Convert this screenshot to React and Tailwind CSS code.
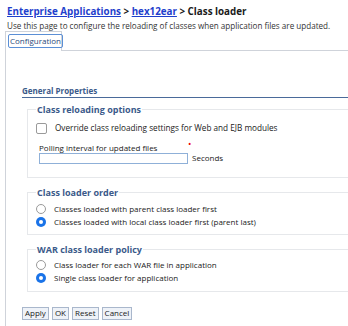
export default function App() {
  return (
    <div className="w-[348px] h-[326px] bg-white overflow-hidden font-['Open_Sans',sans-serif] text-[8px] text-[#1a1a1a] leading-none">
      <div className="pl-[7px] pt-[7px]">
        <div className="font-bold text-[9.8px]">
          <a className="text-[#1f3fcc] underline">Enterprise Applications</a>
          <span> &gt; </span>
          <a className="text-[#1f3fcc] underline">hex12ear</a>
          <span> &gt; Class loader</span>
        </div>
        <p className="mt-[5px] text-[8.1px] text-[#333]">Use this page to configure the reloading of classes when application files are updated.</p>
      </div>

      <div className="mt-[1px] ml-[5px] flex items-end">
        <div className="h-[20px] w-[57px] border border-b-0 border-[#cfd3da] bg-white flex items-center px-[2px]">
          <span className="border border-[#5b8fd6] rounded-[2px] px-[1px] py-[2px] text-[#2b4a7a]">Configuration</span>
        </div>
        <div className="flex-1 border-b border-[#cfd3da]" />
      </div>

      <div className="ml-[5px] border-l border-[#cfd3da] pl-[16px] pt-[36px] pb-[10px]">
        <div className="font-bold text-[#3b5a8a] border-b border-[#4a6a9a] pb-[2px]">General Properties</div>

        <div className="ml-[5px] mt-[7px] flex flex-col gap-[10px]">
          <fieldset className="border border-[#e6e8eb] border-r-0 px-[8px] pb-[13px]">
            <legend className="px-[1px] font-bold text-[9px] text-[#3b5a8a]">Class reloading options</legend>
            <label className="flex items-center gap-[8px] mt-[9px]">
              <span className="w-[11px] h-[11px] border border-[#9a9a9a] rounded-[2px] bg-white" />
              <span className="text-[8.2px]">Override class reloading settings for Web and EJB modules</span>
            </label>
            <div className="mt-[10px] ml-[3px] relative">
              <span className="absolute left-[149px] -top-[5px] text-[#e00] text-[9px]">•</span>
              <div>Polling interval for updated files</div>
              <div className="flex items-center gap-[4px] mt-[1px]">
                <span className="w-[149px] h-[11px] border border-[#8fb0d8] bg-white" />
                <span>Seconds</span>
              </div>
            </div>
          </fieldset>

          <fieldset className="border border-[#e6e8eb] border-r-0 px-[8px] pb-[7px]">
            <legend className="px-[1px] font-bold text-[9px] text-[#3b5a8a]">Class loader order</legend>
            <div className="flex flex-col gap-[3px] mt-[7px]">
              <label className="flex items-center gap-[8px]">
                <span className="w-[10px] h-[10px] rounded-full border border-[#9a9a9a] bg-white" />
                <span>Classes loaded with parent class loader first</span>
              </label>
              <label className="flex items-center gap-[8px]">
                <span className="w-[10px] h-[10px] rounded-full bg-[#1a73e8] flex items-center justify-center">
                  <span className="w-[4px] h-[4px] rounded-full bg-white" />
                </span>
                <span>Classes loaded with local class loader first (parent last)</span>
              </label>
            </div>
          </fieldset>

          <fieldset className="border border-[#e6e8eb] border-r-0 px-[8px] pb-[8px]">
            <legend className="px-[1px] font-bold text-[9px] text-[#3b5a8a]">WAR class loader policy</legend>
            <div className="flex flex-col gap-[3px] mt-[6px]">
              <label className="flex items-center gap-[8px]">
                <span className="w-[10px] h-[10px] rounded-full border border-[#9a9a9a] bg-white" />
                <span>Class loader for each WAR file in application</span>
              </label>
              <label className="flex items-center gap-[8px]">
                <span className="w-[10px] h-[10px] rounded-full bg-[#1a73e8] flex items-center justify-center">
                  <span className="w-[4px] h-[4px] rounded-full bg-white" />
                </span>
                <span>Single class loader for application</span>
              </label>
            </div>
          </fieldset>
        </div>

        <div className="mt-[15px] flex gap-[3px]">
          {['Apply', 'OK', 'Reset', 'Cancel'].map(b => (
            <button key={b} className="h-[13px] px-[2px] border border-[#a9b7cc] bg-[#eef2f8] text-[8px] text-[#1a1a1a]">{b}</button>
          ))}
        </div>
      </div>
    </div>
  );
}
